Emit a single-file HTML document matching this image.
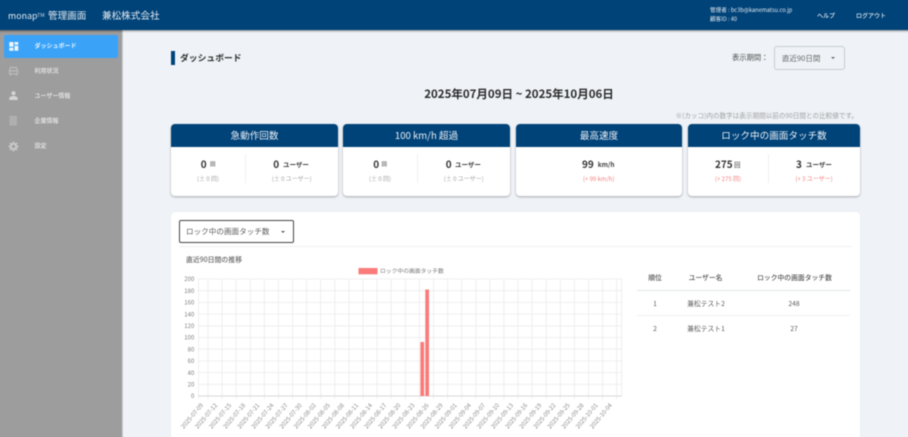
<!DOCTYPE html>
<html lang="ja">
<head>
<meta charset="utf-8">
<title>monap 管理画面</title>
<style>
html,body{margin:0;padding:0;width:908px;height:437px;overflow:hidden;background:#eff3f7}
body{font-family:"Noto Sans CJK JP","Liberation Sans",sans-serif;position:relative;color:#333}
#wrap{position:absolute;left:-6px;top:-6px;width:920px;height:449px;overflow:hidden;filter:blur(.4px)}
#in{position:absolute;left:6px;top:6px;width:908px;height:437px}
.a{position:absolute;white-space:nowrap;line-height:1}
.c{transform:translateX(-50%)}
.header{position:absolute;left:-6px;top:-6px;width:920px;height:36px;background:#004379;box-shadow:0 1px 2px rgba(0,0,0,.45)}
.side{position:absolute;left:-6px;top:30px;width:128px;height:413px;background:#9d9d9d;border-right:1px solid #c9cdd1}
.active{position:absolute;left:4px;top:35px;width:114px;height:22.5px;background:#3aa3f8;border-radius:2px}
.nav{font-size:6px;color:#dedede;font-weight:700;left:34.5px}
.card{position:absolute;top:124px;height:72px;background:#fff;border-radius:4px;box-shadow:0 1px 2px rgba(0,0,0,.32);overflow:hidden}
.card .h{height:23px;background:#004379;color:#e8eef4;font-size:9.6px;line-height:23px;text-align:center}
.card .div{position:absolute;top:30px;width:1px;height:29px;background:#eeeff1}
.n{font-size:10px;font-weight:700;color:#333;top:158.7px}
.u{font-size:6.5px;font-weight:700;color:#444;top:161.2px}
.k{font-size:5.5px;font-weight:700;color:#808080;top:161.5px}
.s{font-size:6px;color:#a6a6a6;top:175.7px}
.r{color:#f47f7f}
.panel{position:absolute;left:171px;top:212px;width:689px;height:240px;background:#fff;border-radius:4px;box-shadow:0 0 1px rgba(0,0,0,.1)}
.th{font-size:6.8px;color:#555;font-weight:500;top:273.8px}
.td{font-size:6.8px;color:#5c5c5c;top:299.9px}
svg text{font-family:"Noto Sans CJK JP","Liberation Sans",sans-serif}
</style>
</head>
<body>
<div id="wrap"><div id="in">
  <div class="side"></div>
  <div class="header"></div>
  <div class="a" style="left:8px;top:11.5px;font-size:8.8px;letter-spacing:.05px;color:#e6edf3">monap</div>
  <div class="a" style="left:37px;top:13px;font-size:5.5px;color:#c6d4e0">TM</div>
  <div class="a" style="left:48px;top:11.2px;font-size:9.6px;color:#dfe7ee">管理画面</div>
  <div class="a" style="left:102px;top:11.2px;font-size:9.6px;color:#e6edf3">兼松株式会社</div>
  <div class="a" style="left:710px;top:8.2px;font-size:5.6px;color:#e2e9ef">管理者 : bc3b@kanematsu.co.jp</div>
  <div class="a" style="left:710px;top:17.2px;font-size:5.6px;color:#e2e9ef">顧客ID : 40</div>
  <div class="a" style="left:817px;top:13px;font-size:6px;color:#e4ebf1;font-weight:500">ヘルプ</div>
  <div class="a" style="left:856px;top:13px;font-size:6px;color:#e4ebf1;font-weight:500">ログアウト</div>

  <div class="active"></div>
  <svg class="a" style="left:8px;top:41.3px" width="11" height="11" viewBox="0 0 11 11"><path fill="#eef6fe" d="M1.3 1h4.200v4.800H1.300zM6.500 1h3.800v2.800H6.500zM6.500 4.800h3.800v5H6.500zM1.300 6.800h4.200v3H1.300z"/></svg>
  <div class="a nav" style="top:43px;color:#e5f3ff">ダッシュボード</div>

  <svg class="a" style="left:8px;top:65px" width="11" height="11" viewBox="0 0 11 11"><path fill="none" stroke="#bcbcbc" stroke-width="1.200" d="M1.500 5.800l1-3.300h6l1 3.300v3h-8z"/><path fill="#bcbcbc" d="M1 5.200h9v1.300H1zM1.500 8.800h2v1.400h-2zM7.500 8.800h2v1.400h-2z"/></svg>
  <div class="a nav" style="top:67.7px">利用状況</div>

  <svg class="a" style="left:8px;top:90.3px" width="11" height="11" viewBox="0 0 11 11"><circle cx="5.500" cy="3.200" r="2.100" fill="#d4d4d4"/><path fill="#d4d4d4" d="M1.300 10V8.200c0-1.500 2.700-2.200 4.200-2.200s4.200.7 4.200 2.200V10z"/></svg>
  <div class="a nav" style="top:92.7px">ユーザー情報</div>

  <svg class="a" style="left:9px;top:115px" width="9" height="11" viewBox="0 0 9 11"><rect x=".7" y="1" width="7" height="9.300" fill="#b7b7b7"/><path stroke="#a2a2a2" stroke-width=".5" d="M.7 3.300h7M.7 5.600h7M.7 7.900h7M3 1v9.300M5.400 1v9.300"/></svg>
  <div class="a nav" style="top:117.7px">企業情報</div>

  <svg class="a" style="left:8px;top:140.5px" width="11" height="11" viewBox="0 0 11 11"><circle cx="5.500" cy="5.500" r="2.600" fill="none" stroke="#c9c9c9" stroke-width="2"/><path stroke="#c9c9c9" stroke-width="1.700" d="M5.500.5v2M5.500 8.500v2M.5 5.500h2M8.500 5.500h2M2 2l1.400 1.400M7.600 7.600L9 9M2 9l1.400-1.400M7.600 3.400L9 2"/></svg>
  <div class="a nav" style="top:142.7px">設定</div>

  <div class="a" style="left:171px;top:51px;width:4px;height:14px;background:#004379"></div>
  <div class="a" style="left:180px;top:53.8px;font-size:8.8px;font-weight:700;color:#2e2e2e">ダッシュボード</div>

  <div class="a" style="left:732px;top:54.7px;font-size:7.3px;color:#4f4f4f">表示期間：</div>
  <div class="a" style="left:774px;top:46px;width:69px;height:22px;border:1px solid #c6ccd2;border-radius:3px"></div>
  <div class="a" style="left:782px;top:54.5px;font-size:7.5px;color:#666">直近90日間</div>
  <div class="a" style="left:830.5px;top:57px;width:0;height:0;border:2.200px solid transparent;border-top:2.500px solid #666"></div>

  <div class="a c" style="left:519px;top:88.5px;font-size:11.5px;font-weight:700;color:#2a2a2a">2025年07月09日 ~ 2025年10月06日</div>
  <div class="a" style="right:50px;top:112px;font-size:6.6px;color:#a0a0a0">※(カッコ)内の数字は表示期間以前の90日間との比較値です。</div>

  <div class="card" style="left:171px;width:167px"><div class="h">急動作回数</div><div class="div" style="left:74px"></div></div>
  <div class="card" style="left:343px;width:167px"><div class="h">100 km/h 超過</div><div class="div" style="left:74px"></div></div>
  <div class="card" style="left:516px;width:166px"><div class="h">最高速度</div></div>
  <div class="card" style="left:688px;width:172px"><div class="h">ロック中の画面タッチ数</div><div class="div" style="left:80px"></div></div>

  <div class="a n" style="left:200.7px">0</div><div class="a k" style="left:210px">回</div>
  <div class="a s c" style="left:208px">(± 0 回)</div>
  <div class="a n" style="left:273.3px">0</div><div class="a u" style="left:283px">ユーザー</div>
  <div class="a s c" style="left:291.7px">(± 0 ユーザー)</div>

  <div class="a n" style="left:373.3px">0</div><div class="a k" style="left:381.5px">回</div>
  <div class="a s c" style="left:380px">(± 0 回)</div>
  <div class="a n" style="left:445.7px">0</div><div class="a u" style="left:455px">ユーザー</div>
  <div class="a s c" style="left:463.7px">(± 0 ユーザー)</div>

  <div class="a n" style="left:582px">99</div><div class="a u" style="left:597.7px">km/h</div>
  <div class="a s c r" style="left:598.7px">(+ 99 km/h)</div>

  <div class="a n" style="left:715px">275</div><div class="a k" style="left:734px;font-size:6.5px;top:161px">回</div>
  <div class="a s c r" style="left:728px">(+ 275 回)</div>
  <div class="a n" style="left:796px">3</div><div class="a u" style="left:806px">ユーザー</div>
  <div class="a s c r" style="left:814px">(+ 3 ユーザー)</div>

  <div class="panel"></div>
  <div class="a" style="left:178.7px;top:220px;width:113px;height:21px;border:1.500px solid #464646;border-radius:2px"></div>
  <div class="a" style="left:186px;top:228px;font-size:7.6px;color:#5c5c5c">ロック中の画面タッチ数</div>
  <div class="a" style="left:280.5px;top:231px;width:0;height:0;border:2.200px solid transparent;border-top:2.500px solid #555"></div>
  <div class="a" style="left:179px;top:246px;width:673px;height:1px;background:#eef0f2"></div>

  <div class="a" style="left:186px;top:255.5px;font-size:6.9px;color:#666;font-weight:500">直近90日間の推移</div>

  <svg class="a" style="left:170px;top:262px" width="470" height="175" viewBox="170 262 470 175" id="chart">
    <rect x="358.5" y="268" width="19" height="6.300" fill="#fb7a7a"/>
    <text x="380" y="272.8" font-size="5.800" fill="#777">ロック中の画面タッチ数</text>
    <g stroke="#ebebeb" stroke-width=".8">
      <path d="M198 279H622M198 290.700H622M198 302.400H622M198 314.100H622M198 325.800H622M198 337.500H622M198 349.200H622M198 360.900H622M198 372.600H622M198 384.300H622"/>
      <path d="M198.500 279V398M208 279V399M222.100 279V399M236.200 279V399M250.300 279V399M264.400 279V399M278.500 279V399M292.500 279V399M306.600 279V399M320.700 279V399M334.800 279V399M348.900 279V399M363 279V399M377.100 279V399M391.200 279V399M405.300 279V399M419.400 279V399M433.500 279V399M447.600 279V399M461.700 279V399M475.800 279V399M489.800 279V399M503.900 279V399M518 279V399M532.100 279V399M546.200 279V399M560.300 279V399M574.400 279V399M588.500 279V399M602.600 279V399M616.700 279V399M621.700 279V396"/>
    </g>
    <path d="M198 396H622" stroke="#d8d8d8" stroke-width=".9"/>
    <rect x="420.4" y="342" width="3.700" height="54" fill="#fb7a7a"/>
    <rect x="425.3" y="289.5" width="3.700" height="106.500" fill="#fb7a7a"/>
    <g font-size="6" fill="#808080" text-anchor="end">
      <text x="194.300" y="281.200">200</text><text x="194.300" y="292.900">180</text><text x="194.300" y="304.600">160</text><text x="194.300" y="316.300">140</text><text x="194.300" y="328">120</text><text x="194.300" y="339.700">100</text><text x="194.300" y="351.400">80</text><text x="194.300" y="363.100">60</text><text x="194.300" y="374.800">40</text><text x="194.300" y="386.500">20</text><text x="194.300" y="398.200">0</text>
    </g>
    <g font-size="6" fill="#8c8c8c" text-anchor="end">
      <text transform="translate(203.5 405.5) rotate(-50)">2025-07-09</text>
      <text transform="translate(217.6 405.5) rotate(-50)">2025-07-12</text>
      <text transform="translate(231.7 405.5) rotate(-50)">2025-07-15</text>
      <text transform="translate(245.8 405.5) rotate(-50)">2025-07-18</text>
      <text transform="translate(259.9 405.5) rotate(-50)">2025-07-21</text>
      <text transform="translate(274 405.5) rotate(-50)">2025-07-24</text>
      <text transform="translate(288.1 405.5) rotate(-50)">2025-07-27</text>
      <text transform="translate(302.2 405.5) rotate(-50)">2025-07-30</text>
      <text transform="translate(316.3 405.5) rotate(-50)">2025-08-02</text>
      <text transform="translate(330.4 405.5) rotate(-50)">2025-08-05</text>
      <text transform="translate(344.5 405.5) rotate(-50)">2025-08-08</text>
      <text transform="translate(358.6 405.5) rotate(-50)">2025-08-11</text>
      <text transform="translate(372.7 405.5) rotate(-50)">2025-08-14</text>
      <text transform="translate(386.8 405.5) rotate(-50)">2025-08-17</text>
      <text transform="translate(400.9 405.5) rotate(-50)">2025-08-20</text>
      <text transform="translate(415 405.5) rotate(-50)">2025-08-23</text>
      <text transform="translate(429.1 405.5) rotate(-50)">2025-08-26</text>
      <text transform="translate(443.2 405.5) rotate(-50)">2025-08-29</text>
      <text transform="translate(457.3 405.5) rotate(-50)">2025-09-01</text>
      <text transform="translate(471.4 405.5) rotate(-50)">2025-09-04</text>
      <text transform="translate(485.5 405.5) rotate(-50)">2025-09-07</text>
      <text transform="translate(499.6 405.5) rotate(-50)">2025-09-10</text>
      <text transform="translate(513.7 405.5) rotate(-50)">2025-09-13</text>
      <text transform="translate(527.8 405.5) rotate(-50)">2025-09-16</text>
      <text transform="translate(541.9 405.5) rotate(-50)">2025-09-19</text>
      <text transform="translate(556 405.5) rotate(-50)">2025-09-22</text>
      <text transform="translate(570.1 405.5) rotate(-50)">2025-09-25</text>
      <text transform="translate(584.2 405.5) rotate(-50)">2025-09-28</text>
      <text transform="translate(598.3 405.5) rotate(-50)">2025-10-01</text>
      <text transform="translate(612.4 405.5) rotate(-50)">2025-10-04</text>
    </g>
  </svg>

  <div class="a th c" style="left:655px">順位</div>
  <div class="a th c" style="left:705.5px">ユーザー名</div>
  <div class="a th c" style="left:794.5px">ロック中の画面タッチ数</div>
  <div class="a" style="left:637px;top:290px;width:213px;height:1px;background:#e2e4e6"></div>
  <div class="a td c" style="left:655px">1</div>
  <div class="a td c" style="left:706px">兼松テスト2</div>
  <div class="a td c" style="left:794px">248</div>
  <div class="a" style="left:637px;top:315px;width:213px;height:1px;background:#f0f1f3"></div>
  <div class="a td c" style="left:655px;top:324.9px">2</div>
  <div class="a td c" style="left:706px;top:324.9px">兼松テスト1</div>
  <div class="a td c" style="left:794px;top:324.9px">27</div>
</div></div>
</body>
</html>
